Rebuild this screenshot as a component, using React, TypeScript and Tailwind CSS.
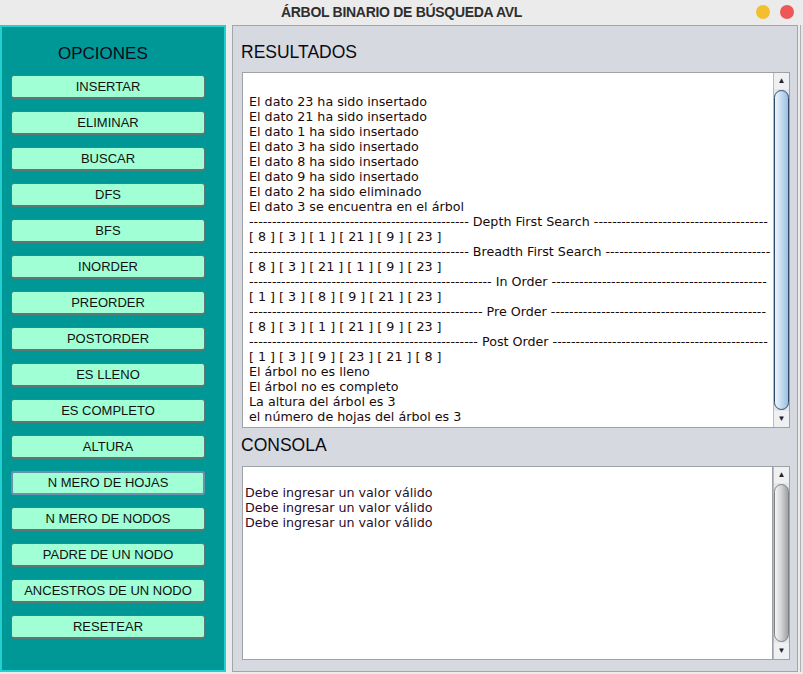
import * as React from 'react';

const botones = [
  'INSERTAR',
  'ELIMINAR',
  'BUSCAR',
  'DFS',
  'BFS',
  'INORDER',
  'PREORDER',
  'POSTORDER',
  'ES LLENO',
  'ES COMPLETO',
  'ALTURA',
  'N MERO DE HOJAS',
  'N MERO DE NODOS',
  'PADRE DE UN NODO',
  'ANCESTROS DE UN NODO',
  'RESETEAR',
];

const d = (n: number) => '-'.repeat(n);

const resultados = [
  '',
  'El dato 23 ha sido insertado',
  'El dato 21 ha sido insertado',
  'El dato 1 ha sido insertado',
  'El dato 3 ha sido insertado',
  'El dato 8 ha sido insertado',
  'El dato 9 ha sido insertado',
  'El dato 2 ha sido eliminado',
  'El dato 3 se encuentra en el árbol',
  `${d(48)} Depth First Search ${d(38)}`,
  '[ 8 ] [ 3 ] [ 1 ] [ 21 ] [ 9 ] [ 23 ]',
  `${d(48)} Breadth First Search ${d(36)}`,
  '[ 8 ] [ 3 ] [ 21 ] [ 1 ] [ 9 ] [ 23 ]',
  `${d(53)} In Order ${d(47)}`,
  '[ 1 ] [ 3 ] [ 8 ] [ 9 ] [ 21 ] [ 23 ]',
  `${d(51)} Pre Order ${d(47)}`,
  '[ 8 ] [ 3 ] [ 1 ] [ 21 ] [ 9 ] [ 23 ]',
  `${d(50)} Post Order ${d(47)}`,
  '[ 1 ] [ 3 ] [ 9 ] [ 23 ] [ 21 ] [ 8 ]',
  'El árbol no es lleno',
  'El árbol no es completo',
  'La altura del árbol es 3',
  'el número de hojas del árbol es 3',
];

function BarraScroll({ azul }: { azul?: boolean }) {
  return (
    <div className="flex w-[16px] shrink-0 flex-col border-l border-[#b8bcc2] bg-[#e4e6ea]">
      <div className="flex h-[16px] items-center justify-center bg-[#eef0f3] text-[8px] text-[#222]">▲</div>
      <div className="flex-1 py-[1px]">
        <div
          className={
            azul
              ? 'h-full rounded-[8px] border border-[#2b4a6a] bg-gradient-to-r from-[#eef6fd] via-[#c4dbef] to-[#9fbfdf]'
              : 'h-full rounded-[8px] border border-[#7d8085] bg-gradient-to-r from-[#f6f6f6] via-[#d2d2d4] to-[#9fa0a4]'
          }
        />
      </div>
      <div className="flex h-[16px] items-center justify-center bg-[#eef0f3] text-[8px] text-[#222]">▼</div>
    </div>
  );
}

export default function App() {
  return (
    <div className="flex h-[674px] w-[803px] flex-col overflow-hidden bg-[#ececec] font-['Liberation_Sans',sans-serif]">
      <div className="relative flex h-[25px] shrink-0 items-center justify-center bg-[#ebebeb]">
        <span className="text-[14px] font-bold tracking-[-0.3px] text-[#2e2e2e]">ÁRBOL BINARIO DE BÚSQUEDA AVL</span>
        <div className="absolute right-[9px] top-[5px] flex gap-[10px]">
          <span className="h-[14px] w-[14px] rounded-full bg-[#f4bf2f]" />
          <span className="h-[14px] w-[14px] rounded-full bg-[#ee5757]" />
        </div>
      </div>

      <div className="flex flex-1 pb-[2px]">
        <div className="flex w-[226px] shrink-0 flex-col border-2 border-[#22d0d0] bg-[#009896] pl-[9px]">
          <div className="mt-[16px] mb-[10px] ml-[47px] text-[17px] leading-[22px] text-[#0a0a1a]">OPCIONES</div>
          <div className="flex flex-col gap-[12px]">
            {botones.map((b) => (
              <button
                key={b}
                className={
                  b === 'N MERO DE HOJAS'
                    ? 'h-[24px] w-[194px] rounded-[3px] border-2 border-[#6f8fae] bg-[#a0ffd5] text-[13px] text-[#111]'
                    : 'h-[24px] w-[194px] rounded-[3px] border border-b-2 border-[#5d7676] bg-[#a0ffd5] text-[13px] text-[#111]'
                }
              >
                {b}
              </button>
            ))}
          </div>
        </div>

        <div className="ml-[6px] flex w-[566px] shrink-0 flex-col border border-[#a2a5aa] bg-[#d6d9df] pl-[7px] pr-[7px]">
          <div className="mt-[15px] h-[22px] pl-[1px] text-[17.5px] leading-[22px] text-[#0a0a14]">RESULTADOS</div>
          <div className="ml-[2px] mt-[9px] flex h-[356px] border border-[#9ea1a6] bg-white">
            <div className="flex-1 overflow-hidden pl-[6px] pt-[6px] font-['DejaVu_Sans',sans-serif] text-[12.7px] text-[#1a0a0a]">
              {resultados.map((l, i) => (
                <div key={i} className="h-[15px] overflow-hidden whitespace-nowrap leading-[15px]">
                  {l}
                </div>
              ))}
            </div>
            <BarraScroll azul />
          </div>
          <div className="mt-[6px] h-[22px] pl-[1px] text-[17.5px] leading-[22px] text-[#0a0a14]">CONSOLA</div>
          <div className="ml-[2px] mt-[10px] flex h-[194px] border border-[#9ea1a6] bg-white">
            <div className="flex-1 border-r border-[#9ea1a6] pl-[2px] pt-[18px] font-['DejaVu_Sans',sans-serif] text-[12.7px] text-[#2a0a2a]">
              <div className="h-[15px] leading-[15px]">Debe ingresar un valor válido</div>
              <div className="h-[15px] leading-[15px]">Debe ingresar un valor válido</div>
              <div className="h-[15px] leading-[15px]">Debe ingresar un valor válido</div>
            </div>
            <BarraScroll />
          </div>
        </div>
        <div className="ml-[2px] flex-1 border-l border-[#b0b0b0] bg-[#e6e6e6]" />
      </div>
    </div>
  );
}
